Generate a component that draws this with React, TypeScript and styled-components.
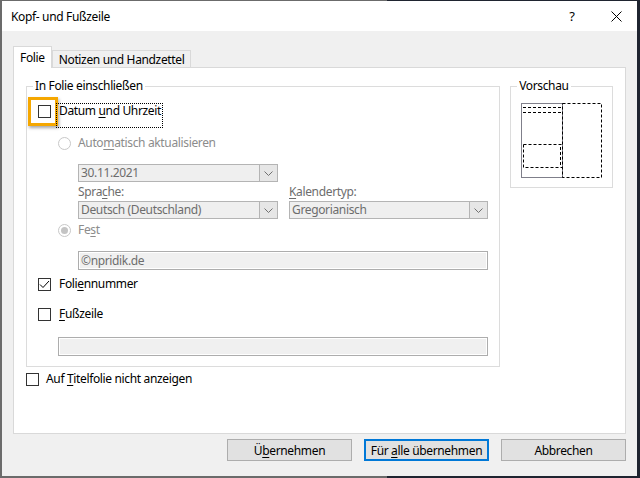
import React from "react";
import styled, { createGlobalStyle } from "styled-components";

const GlobalStyle = createGlobalStyle`
  html, body {
    margin: 0;
    padding: 0;
  }
  body {
    width: 640px;
    height: 478px;
    overflow: hidden;
    background: linear-gradient(to right, #6b6b6b 387px, #1f2430 387px);
    font-family: "Noto Sans", "Open Sans", sans-serif;
    font-size: 12px;
    letter-spacing: -0.35px;
    color: #000;
  }
`;

const Dialog = styled.div`
  width: 635px;
  height: 475px;
  margin: 1px 0 0 2px;
  background: #f0f0f0;
  display: flex;
  flex-direction: column;
`;

const TitleBar = styled.div`
  height: 30px;
  background: #fff;
  display: flex;
  align-items: center;
  padding-left: 9px;
`;

const Title = styled.div`
  flex: 1;
  font-size: 12px;
`;

const TitleButton = styled.div<{ $w: number }>`
  width: ${(p) => p.$w}px;
  height: 30px;
  display: flex;
  align-items: center;
  justify-content: center;
  font-size: 13px;
`;

const Body = styled.div`
  flex: 1;
  display: flex;
  flex-direction: column;
  padding: 15px 11px 0 11px;
`;

const TabStrip = styled.div`
  height: 21px;
  display: flex;
  align-items: flex-end;
`;

const Tab = styled.div<{ $active?: boolean }>`
  box-sizing: border-box;
  height: ${(p) => (p.$active ? 22 : 17)}px;
  padding: 0 6px;
  border: 1px solid #d9d9d9;
  border-bottom: none;
  background: ${(p) => (p.$active ? "#fff" : "#f0f0f0")};
  margin-bottom: ${(p) => (p.$active ? -1 : 0)}px;
  position: relative;
  z-index: ${(p) => (p.$active ? 1 : 0)};
  display: flex;
  align-items: center;
`;

const Panel = styled.div`
  box-sizing: border-box;
  height: 367px;
  background: #fff;
  border: 1px solid #d9d9d9;
  padding: 18px 12px 0 12px;
  display: flex;
  flex-direction: column;
`;

const GroupRow = styled.div`
  display: flex;
  align-items: flex-start;
  gap: 10px;
`;

const Group = styled.div<{ $w: number; $h: number }>`
  position: relative;
  box-sizing: border-box;
  width: ${(p) => p.$w}px;
  height: ${(p) => p.$h}px;
  border: 1px solid #dcdcdc;
  display: flex;
  flex-direction: column;
`;

const Legend = styled.span`
  position: absolute;
  top: -9px;
  left: 6px;
  padding: 0 2px;
  background: #fff;
  line-height: 16px;
`;

const GroupContent = styled.div`
  display: flex;
  flex-direction: column;
  padding: 16px 11px 0 11px;
`;

const Row = styled.div<{ $indent?: number; $top?: number }>`
  display: flex;
  align-items: center;
  height: 16px;
  margin-left: ${(p) => p.$indent || 0}px;
  margin-top: ${(p) => p.$top || 0}px;
`;

const FieldRow = styled.div<{ $indent?: number; $top?: number }>`
  display: flex;
  gap: 11px;
  margin-left: ${(p) => p.$indent || 0}px;
  margin-top: ${(p) => p.$top || 0}px;
`;

const CheckWrap = styled.span`
  position: relative;
  display: inline-flex;
`;

const CheckBox = styled.span`
  box-sizing: border-box;
  width: 13px;
  height: 13px;
  border: 1px solid #333;
  background: #fff;
  display: inline-flex;
  align-items: center;
  justify-content: center;
`;

const Highlight = styled.span`
  position: absolute;
  left: -10px;
  top: -8px;
  width: 30px;
  height: 29px;
  box-sizing: border-box;
  border: 3px solid #f5a700;
  box-shadow: 1px 2px 3px rgba(0, 0, 0, 0.35);
`;

const Radio = styled.span<{ $checked?: boolean }>`
  box-sizing: border-box;
  width: 13px;
  height: 13px;
  border-radius: 50%;
  border: 1px solid #c8c8c8;
  background: #fff;
  display: inline-flex;
  align-items: center;
  justify-content: center;
  &::after {
    content: "";
    display: ${(p) => (p.$checked ? "block" : "none")};
    width: 7px;
    height: 7px;
    border-radius: 50%;
    background: #c4c4c4;
  }
`;

const Label = styled.span<{ $gap: number; $dim?: boolean }>`
  position: relative;
  margin-left: ${(p) => p.$gap}px;
  line-height: 16px;
  color: ${(p) => (p.$dim ? "#8c8c8c" : "#000")};
  white-space: nowrap;
`;

const FocusFrame = styled.span`
  position: absolute;
  left: -3px;
  right: -2px;
  top: 0;
  bottom: -9px;
  border: 1px dotted #000;
`;

const Caption = styled.span<{ $w: number }>`
  width: ${(p) => p.$w}px;
  line-height: 16px;
  color: #6d6d6d;
`;

const Mn = styled.u`
  text-decoration: underline;
  text-underline-offset: 2px;
`;

const Combo = styled.div<{ $w: number }>`
  box-sizing: border-box;
  width: ${(p) => p.$w}px;
  height: 18px;
  border: 1px solid #b4b4b4;
  background: #efefef;
  display: flex;
  color: #6d6d6d;
`;

const ComboText = styled.span`
  flex: 1;
  padding-left: 2px;
  line-height: 16px;
`;

const ComboButton = styled.span`
  box-sizing: border-box;
  width: 18px;
  border-left: 1px solid #b4b4b4;
  background: #e6e6e6;
  display: flex;
  align-items: center;
  justify-content: center;
`;

const TextField = styled.div<{ $w: number }>`
  box-sizing: border-box;
  width: ${(p) => p.$w}px;
  height: 19px;
  border: 1px solid #adadad;
  box-shadow: inset 0 0 0 1px #fff;
  background: #f0f0f0;
  color: #6d6d6d;
  padding-left: 2px;
  line-height: 17px;
`;

const Preview = styled.div`
  padding: 16px 0 0 10px;
`;

const ButtonRow = styled.div`
  display: flex;
  justify-content: flex-end;
  gap: 12px;
  margin-top: 5px;
`;

const Button = styled.div<{ $focus?: boolean }>`
  box-sizing: border-box;
  width: 125px;
  height: 22px;
  background: #e1e1e1;
  border: ${(p) => (p.$focus ? "2px solid #0078d7" : "1px solid #adadad")};
  display: flex;
  align-items: center;
  justify-content: center;
`;

const Chevron = () => (
  <svg width="9" height="5" viewBox="0 0 9 5">
    <path d="M0.5 0.5 L4.5 4.5 L8.5 0.5" fill="none" stroke="#707070" strokeWidth="1" />
  </svg>
);

const Check = () => (
  <svg width="11" height="11" viewBox="0 0 11 11">
    <path d="M1 5.5 L4 8.5 L10 2" fill="none" stroke="#000" strokeWidth="1" />
  </svg>
);

const dash = { stroke: "#000", strokeWidth: 1, strokeDasharray: "3 2", fill: "none" };

const PreviewArt = () => (
  <svg width="82" height="76" viewBox="0 0 82 76">
    <rect x="0.5" y="0.5" width="41" height="74" fill="none" stroke="#7f7f8a" />
    <path d="M41.5 0.5 H80.5 V74.5 H41.5 Z" {...dash} />
    <path d="M2 4.5 H41" {...dash} />
    <path d="M2 9.5 H41" {...dash} />
    <path d="M2.5 41.5 H41 M2.5 41.5 V64.5 H41" {...dash} />
    <path d="M39.5 44 V64" {...dash} />
  </svg>
);

export default function App() {
  return (
    <>
      <GlobalStyle />
      <Dialog>
        <TitleBar>
          <Title>Kopf- und Fußzeile</Title>
          <TitleButton $w={46}>?</TitleButton>
          <TitleButton $w={42}>
            <svg width="11" height="11" viewBox="0 0 11 11">
              <path d="M0.5 0.5 L10.5 10.5 M10.5 0.5 L0.5 10.5" stroke="#000" strokeWidth="1" />
            </svg>
          </TitleButton>
        </TitleBar>
        <Body>
          <TabStrip>
            <Tab $active>Folie</Tab>
            <Tab>Notizen und Handzettel</Tab>
          </TabStrip>
          <Panel>
            <GroupRow>
              <Group $w={475} $h={281}>
                <Legend>In Folie einschließen</Legend>
                <GroupContent>
                  <Row>
                    <CheckWrap>
                      <CheckBox />
                      <Highlight />
                    </CheckWrap>
                    <Label $gap={8}>
                      Datum <Mn>u</Mn>nd Uhrzeit
                      <FocusFrame />
                    </Label>
                  </Row>
                  <Row $indent={20} $top={16}>
                    <Radio />
                    <Label $gap={7} $dim>
                      Auto<Mn>m</Mn>atisch aktualisieren
                    </Label>
                  </Row>
                  <FieldRow $indent={40} $top={13}>
                    <Combo $w={200}>
                      <ComboText>30.11.2021</ComboText>
                      <ComboButton>
                        <Chevron />
                      </ComboButton>
                    </Combo>
                  </FieldRow>
                  <FieldRow $indent={40} $top={2}>
                    <Caption $w={200}>
                      Spra<Mn>c</Mn>he:
                    </Caption>
                    <Caption $w={199}>
                      <Mn>K</Mn>alendertyp:
                    </Caption>
                  </FieldRow>
                  <FieldRow $indent={40} $top={1}>
                    <Combo $w={200}>
                      <ComboText>Deutsch (Deutschland)</ComboText>
                      <ComboButton>
                        <Chevron />
                      </ComboButton>
                    </Combo>
                    <Combo $w={199}>
                      <ComboText>Gregorianisch</ComboText>
                      <ComboButton>
                        <Chevron />
                      </ComboButton>
                    </Combo>
                  </FieldRow>
                  <Row $indent={20} $top={3}>
                    <Radio $checked />
                    <Label $gap={7} $dim>
                      Fe<Mn>s</Mn>t
                    </Label>
                  </Row>
                  <FieldRow $indent={40} $top={13}>
                    <TextField $w={410}>©npridik.de</TextField>
                  </FieldRow>
                  <Row $top={6}>
                    <CheckBox>
                      <Check />
                    </CheckBox>
                    <Label $gap={8}>
                      Foli<Mn>e</Mn>nnummer
                    </Label>
                  </Row>
                  <Row $top={14}>
                    <CheckBox />
                    <Label $gap={8}>
                      <Mn>F</Mn>ußzeile
                    </Label>
                  </Row>
                  <FieldRow $indent={20} $top={15}>
                    <TextField $w={430} />
                  </FieldRow>
                </GroupContent>
              </Group>
              <Group $w={103} $h={102}>
                <Legend>Vorschau</Legend>
                <Preview>
                  <PreviewArt />
                </Preview>
              </Group>
            </GroupRow>
            <Row $top={4}>
              <CheckBox />
              <Label $gap={7}>
                Auf <Mn>T</Mn>itelfolie nicht anzeigen
              </Label>
            </Row>
          </Panel>
          <ButtonRow>
            <Button>
              Ü<Mn>b</Mn>ernehmen
            </Button>
            <Button $focus>
              Für&nbsp;<Mn>a</Mn>lle übernehmen
            </Button>
            <Button>Abbrechen</Button>
          </ButtonRow>
        </Body>
      </Dialog>
    </>
  );
}
